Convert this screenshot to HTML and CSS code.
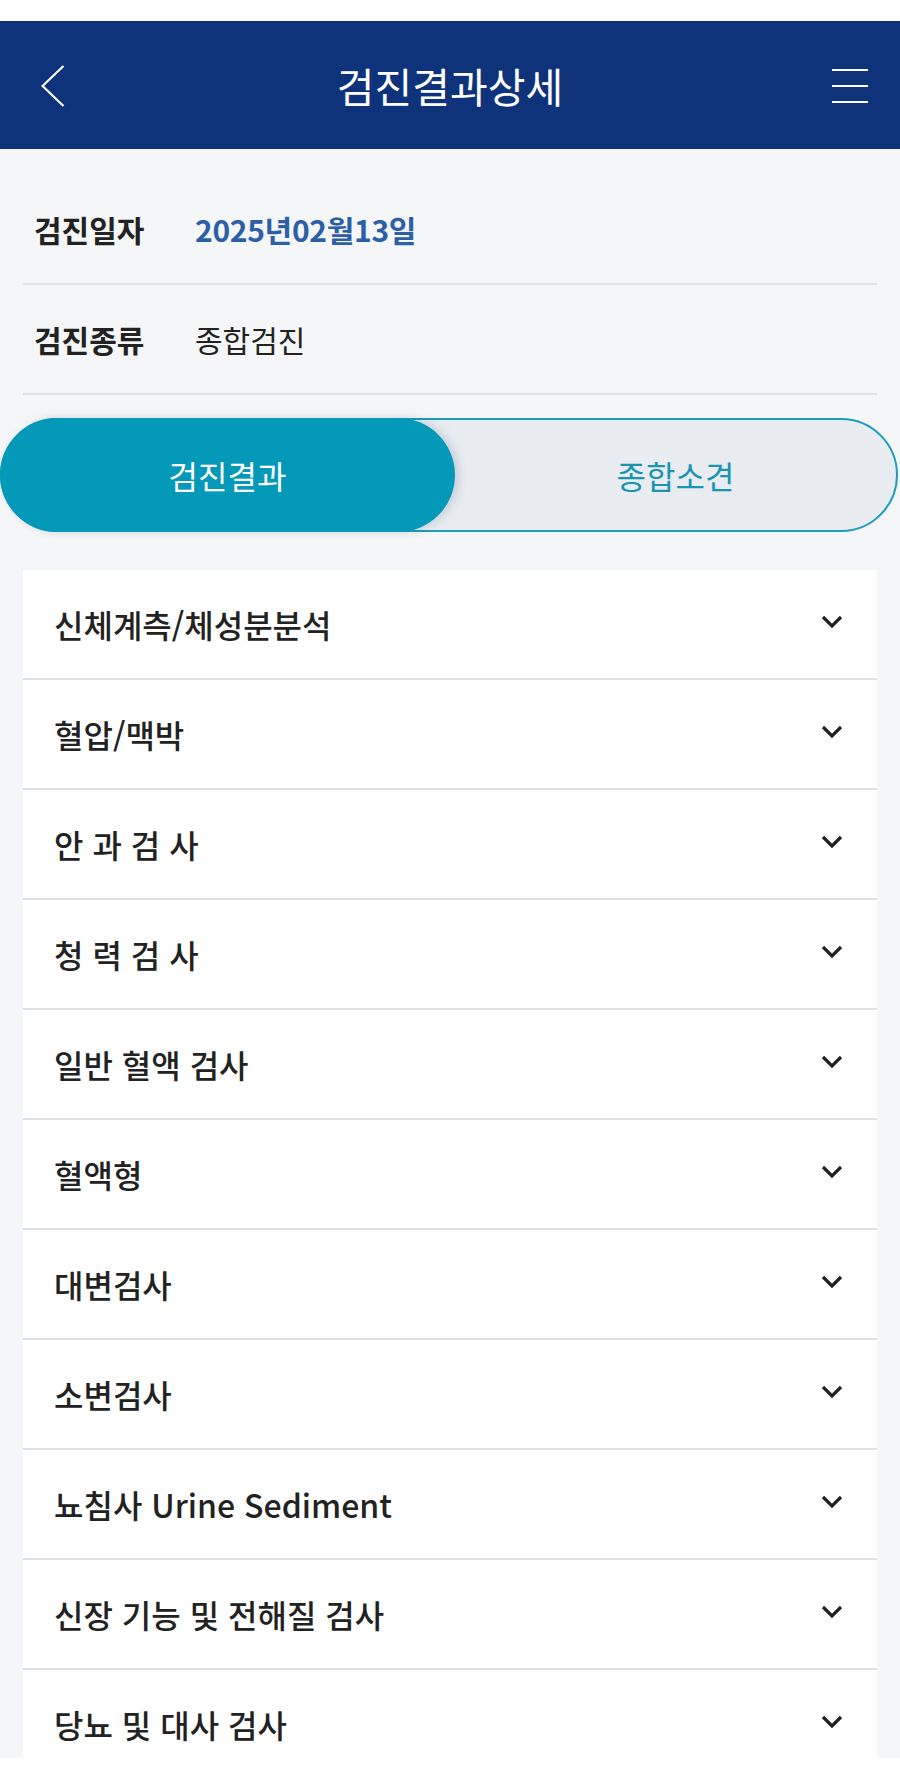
FILE: index.html
```html
<!DOCTYPE html>
<html lang="ko">

<head>
    <meta charset="UTF-8">
    <meta name="viewport" content="width=device-width, initial-scale=1.0">
    <title>검진결과상세</title>
    <link rel="stylesheet" href="styles.css">
</head>

<body>

    <!-- Statusbar -->
    <div class="statusbar"></div>

    <!-- Header -->
    <header class="header">
        <a class="header-back" href="#">
            <svg width="24" height="42" viewBox="0 0 24 42">
                <polyline points="22.5,1 1.5,21 22.5,41" fill="none" stroke="#fff" stroke-width="2.2" />
            </svg>
        </a>
        <h1 class="header-title">검진결과상세</h1>
        <a class="header-menu" href="#">
            <span></span>
            <span></span>
            <span></span>
        </a>
    </header>

    <!-- Info -->
    <div class="info">
        <div class="info-row">
            <span class="info-label">검진일자</span>
            <span class="info-value info-date">2025년02월13일</span>
        </div>
        <div class="info-row">
            <span class="info-label">검진종류</span>
            <span class="info-value">종합검진</span>
        </div>
    </div>

    <!-- Tabs -->
    <div class="tabs">
        <button class="tab active">검진결과</button>
        <button class="tab">종합소견</button>
    </div>

    <!-- Result list -->
    <ul class="result-list">
        <li class="result-item"><span>신체계측/체성분분석</span><i class="chevron"></i></li>
        <li class="result-item"><span>혈압/맥박</span><i class="chevron"></i></li>
        <li class="result-item"><span>안 과 검 사</span><i class="chevron"></i></li>
        <li class="result-item"><span>청 력 검 사</span><i class="chevron"></i></li>
        <li class="result-item"><span>일반 혈액 검사</span><i class="chevron"></i></li>
        <li class="result-item"><span>혈액형</span><i class="chevron"></i></li>
        <li class="result-item"><span>대변검사</span><i class="chevron"></i></li>
        <li class="result-item"><span>소변검사</span><i class="chevron"></i></li>
        <li class="result-item"><span>뇨침사 Urine Sediment</span><i class="chevron"></i></li>
        <li class="result-item"><span>신장 기능 및 전해질 검사</span><i class="chevron"></i></li>
        <li class="result-item"><span>당뇨 및 대사 검사</span><i class="chevron"></i></li>
    </ul>

    <!-- Bottom navigation bar -->
    <div class="navbar"></div>

</body>

</html>
```

FILE: styles.css
```css
/* Basis */
html,
body {
    margin: 0;
    padding: 0;
    background-color: #f5f6f8;
    font-family: "Noto Sans CJK KR", "Noto Sans", sans-serif;
    color: #222;
}

.statusbar {
    height: 21px;
    background: #fff;
}

/* Header */
.header {
    height: 128px;
    background: #0e337a;
    display: grid;
    grid-template-columns: 1fr auto 1fr;
    align-items: center;
}

.header-back {
    justify-self: start;
    display: flex;
    padding-left: 41px;
    margin-top: 2px;
}

.header-title {
    margin: 0;
    font-size: 41px;
    font-weight: 400;
    color: #fff;
}

.header-menu {
    justify-self: end;
    padding-right: 32px;
    display: flex;
    flex-direction: column;
    gap: 14px;
    margin-top: 2px;
}

.header-menu span {
    display: block;
    width: 36px;
    height: 2px;
    background: #fff;
}

/* Info rows */
.info {
    padding: 26px 23px 0;
}

.info-row {
    height: 108px;
    display: flex;
    align-items: center;
    border-bottom: 2px solid #dfe0e3;
    font-size: 30px;
}

.info-label {
    width: 161px;
    padding-left: 11px;
    font-weight: 700;
    color: #222;
}

.info-value {
    font-weight: 400;
    color: #222;
}

.info-date {
    font-weight: 700;
    color: #2c5fa6;
    letter-spacing: -0.3px;
}

/* Tabs */
.tabs {
    margin: 23px 2px 0 0;
    height: 114px;
    box-sizing: border-box;
    display: flex;
    background: #e9edf2;
    border: 2px solid #1c9dbc;
    border-radius: 57px;
}

.tab {
    flex: 1;
    border: none;
    background: none;
    font-family: inherit;
    font-size: 32px;
    font-weight: 400;
    color: #1a94b3;
    border-radius: 57px;
    padding: 0;
    margin: -2px 0;
}

.tab.active {
    flex: 0 0 455px;
    margin-left: -2px;
    background: #0499b8;
    color: #fff;
    box-shadow: 4px 0 10px rgba(40, 60, 90, 0.18);
}

/* Result list */
.result-list {
    list-style: none;
    margin: 38px 23px 0;
    padding: 0;
    background: #fff;
}

.result-item {
    height: 108px;
    display: flex;
    align-items: center;
    justify-content: space-between;
    padding: 0 34px 0 31px;
    border-bottom: 2px solid #dfe0e3;
    font-size: 32px;
    font-weight: 500;
    color: #222;
}

.chevron {
    width: 22px;
    height: 14px;
    margin-top: -4px;
    background: url("data:image/svg+xml,%3Csvg xmlns='http://www.w3.org/2000/svg' width='22' height='14' viewBox='0 0 22 14'%3E%3Cpolyline points='2,2 11,11 20,2' fill='none' stroke='%23222' stroke-width='3.2'/%3E%3C/svg%3E") no-repeat center;
}

/* Bottom bar */
.navbar {
    position: fixed;
    left: 0;
    right: 0;
    bottom: 0;
    height: 19px;
    background: #fff;
}
```
